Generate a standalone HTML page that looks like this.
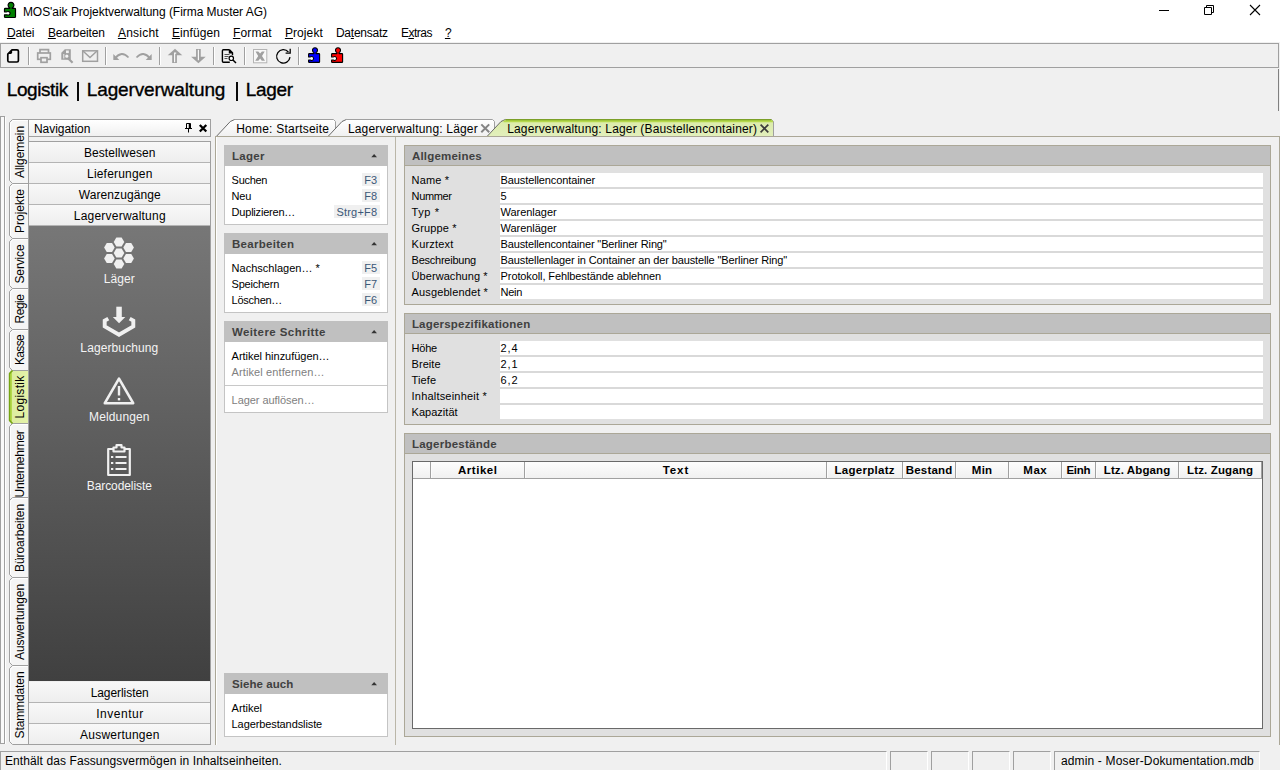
<!DOCTYPE html>
<html><head><meta charset="utf-8"><title>MOS'aik Projektverwaltung</title>
<style>
html,body{margin:0;padding:0;}
body{width:1280px;height:770px;position:relative;overflow:hidden;background:#f0f0f0;font-family:"Liberation Sans", sans-serif;}
.a{position:absolute;box-sizing:border-box;}
u{text-decoration:underline;text-underline-offset:1px;}
svg{position:absolute;overflow:visible;}
.hd{-webkit-text-stroke:0.35px #000;}
</style></head><body>
<div class="a" style="left:0px;top:0px;width:1280px;height:42px;background:#fff;"></div>
<svg style="left:0;top:0" width="24" height="22" viewBox="0 0 24 22">
<path d="M5.3 8.400H9.800V7.900a2.900 2.900 0 1 1 2.400 0V8.400H14.700Q15.500 8.400 15.500 9.200V16.700Q15.500 17.500 14.700 17.500H5.300Q4.500 17.500 4.500 16.700V14.800H7.600a1.700 1.700 0 1 0 0 -3H4.500V9.200Q4.500 8.400 5.300 8.400Z" fill="#008000" stroke="#000" stroke-width="1.200" stroke-linejoin="round"/>
<circle cx="7.6" cy="13.3" r="1" fill="#fff"/>
</svg>
<svg style="left:0;top:0" width="1280" height="22" viewBox="0 0 1280 22">
<path d="M1159 10.5h10" stroke="#000" stroke-width="1" fill="none"/>
<path d="M1204.5 7.5h7v7h-7z M1206.5 7.5v-2h7v7h-2" stroke="#000" stroke-width="1" fill="none"/>
<path d="M1250 5l10 10M1260 5l-10 10" stroke="#000" stroke-width="1.1" fill="none"/>
</svg>
<div class="a" style="left:0px;top:43px;width:1279px;height:25px;background:#f0f0f0;border:1px solid #a0a0a0;"></div>
<div class="a" style="left:28px;top:47px;width:1px;height:18px;background:#a0a0a0;"></div>
<div class="a" style="left:29px;top:47px;width:1px;height:18px;background:#fff;"></div>
<div class="a" style="left:105px;top:47px;width:1px;height:18px;background:#a0a0a0;"></div>
<div class="a" style="left:106px;top:47px;width:1px;height:18px;background:#fff;"></div>
<div class="a" style="left:159px;top:47px;width:1px;height:18px;background:#a0a0a0;"></div>
<div class="a" style="left:160px;top:47px;width:1px;height:18px;background:#fff;"></div>
<div class="a" style="left:213px;top:47px;width:1px;height:18px;background:#a0a0a0;"></div>
<div class="a" style="left:214px;top:47px;width:1px;height:18px;background:#fff;"></div>
<div class="a" style="left:244px;top:47px;width:1px;height:18px;background:#a0a0a0;"></div>
<div class="a" style="left:245px;top:47px;width:1px;height:18px;background:#fff;"></div>
<div class="a" style="left:298px;top:47px;width:1px;height:18px;background:#a0a0a0;"></div>
<div class="a" style="left:299px;top:47px;width:1px;height:18px;background:#fff;"></div>
<svg style="left:0;top:43px" width="360" height="25" viewBox="0 43 360 25">
<!-- new -->
<path d="M12 49.900h5q1.400 0 1.400 1.400v9.300q0 1.400-1.400 1.400h-7.800q-1.400 0-1.400-1.400v-6.400z" fill="#f4f4f4" stroke="#000" stroke-width="1.700" stroke-linejoin="round"/>
<path d="M8.300 53.900h2.500q1.300 0 1.300-1.300v-2.600z" fill="#000"/>
<!-- printer (disabled) -->
<g fill="none" stroke="#a0a0a0" stroke-width="1.700">
<path d="M40 53v-3.300h8.500v3.300"/><rect x="37.7" y="53" width="12.6" height="6.3"/><rect x="41" y="57.7" width="6" height="4.6" fill="#f0f0f0"/>
</g>
<!-- preview (disabled) -->
<path d="M61.300 52.800l3.500-3.600h6v10.600h-9.500z" fill="#a0a0a0"/><path d="M64 51.500h5" stroke="#f0f0f0" stroke-width="0" />
<circle cx="66.800" cy="56.200" r="2.300" fill="#f4f4f4" stroke="#a0a0a0" stroke-width="1.300"/><rect x="66" y="50.500" width="2.800" height="2.600" fill="#f0f0f0"/>
<path d="M68.300 58.500l4.300 4.300" stroke="#a0a0a0" stroke-width="2.200" fill="none"/><path d="M63.800 54v4.500" stroke="#f0f0f0" stroke-width="1" fill="none"/>
<!-- mail (disabled) -->
<g fill="none" stroke="#a0a0a0" stroke-width="1.500"><rect x="82.700" y="50.800" width="14.800" height="10.500"/><path d="M83 51l7 6.5l7-6.5"/></g>
<!-- undo / redo (disabled) -->
<g fill="none" stroke="#a0a0a0" stroke-width="1.8"><path d="M115 58.5q6.5-8.5 13.5-1"/><path d="M150 58.5q-6.500-8.500-13.500-1"/></g>
<path d="M113.300 54v6h6z" fill="#a0a0a0"/><path d="M151.700 54v6h-6z" fill="#a0a0a0"/>
<!-- up / down arrows (disabled) -->
<path d="M175 48.700l7.300 6.600h-14.600z" fill="#a0a0a0"/><rect x="172.200" y="55" width="4.700" height="8" fill="#a0a0a0"/><path d="M174.600 62.300V53.200h1.600" stroke="#f8f8f8" stroke-width="1.200" fill="none"/>
<path d="M198.400 63.300l7.300-6.600h-14.600z" fill="#a0a0a0"/><rect x="196.050" y="49" width="4.700" height="8" fill="#a0a0a0"/><path d="M198.400 49.800V60.300" stroke="#f8f8f8" stroke-width="1.200" fill="none"/>
<!-- doc search -->
<g fill="none" stroke="#000"><path d="M229.500 49.700h-6.100q-1 0-1 1v10.600q0 1 1 1h6.400 M229.500 49.700l3 3v2.600 M229.500 49.700v3h3" stroke-width="1.400"/>
<path d="M224.500 54.500h5M224.500 56.500h4M224.500 58.500h3" stroke-width="1" stroke="#555"/><circle cx="231.300" cy="58.300" r="2.200" stroke-width="1.200" fill="#fff"/><path d="M233 60l3 3" stroke-width="1.500"/></g>
<!-- delete (disabled) -->
<rect x="253.500" y="49.500" width="13.300" height="13.300" fill="#f8f8f8" stroke="#b4b4b4" stroke-width="1"/>
<path d="M255.500 51.400h2.800l1.800 2.200l1.800-2.200h2.800l-2.700 4.600l3 4.800h-3.200l-1.700-2.300l-1.700 2.300h-3.200l3-4.800z" fill="#a0a0a0"/>
<!-- refresh -->
<path d="M290 57.200a6.700 6.700 0 1 1 -1.600 -5.200" fill="none" stroke="#000" stroke-width="1.300"/><path d="M285.600 53.200H290.200V48.700" fill="none" stroke="#000" stroke-width="1.300"/>
<!-- blue puzzle -->
<path d="M309.30 53.600H313.90V52.500a2.500 2.500 0 1 1 2.200 0V53.600H318.90Q319.60 53.600 319.60 54.300V61.700Q319.60 62.400 318.90 62.400H309.30Q308.60 62.400 308.60 61.700V60H310.60a1.860 1.860 0 1 0 0 -3H308.60V54.300Q308.60 53.600 309.30 53.600Z" fill="#0000ff" stroke="#000" stroke-width="1.100" stroke-linejoin="round"/><circle cx="311.60" cy="58.5" r="1.150" fill="#fff"/>
<path d="M332.30 53.600H336.90V52.500a2.500 2.500 0 1 1 2.200 0V53.600H341.90Q342.60 53.600 342.60 54.300V61.700Q342.60 62.400 341.90 62.400H332.30Q331.60 62.400 331.60 61.700V60H333.60a1.860 1.860 0 1 0 0 -3H331.60V54.300Q331.60 53.600 332.30 53.600Z" fill="#ff0000" stroke="#000" stroke-width="1.100" stroke-linejoin="round"/><circle cx="334.60" cy="58.5" r="1.150" fill="#fff"/>
</svg>
<div class="a" style="left:1278px;top:69px;width:1px;height:42px;background:#808080;"></div>
<div class="a" style="left:76.9px;top:81.8px;width:2.1px;height:19px;background:#0a0a0a;"></div>
<div class="a" style="left:235.9px;top:81.8px;width:2.1px;height:19px;background:#0a0a0a;"></div>
<div class="a" style="left:0px;top:116px;width:5px;height:628px;background:#fafafa;border:1px solid #a0a0a0;"></div>
<div class="a" style="left:5px;top:117px;width:1px;height:627px;background:#fff;"></div>
<svg style="left:0;top:0" width="40" height="770" viewBox="0 0 40 770"><defs><linearGradient id="vgg" x1="0" x2="1" y1="0" y2="0"><stop offset="0" stop-color="#dcec9f"/><stop offset="1" stop-color="#e4f2a8"/></linearGradient></defs><path d="M28.500 119.500H12.500L9.500 122.500V180.5L12.500 183.5L9.500 186.5V235.5L12.500 238.5L9.500 241.5V285.5L12.500 288.5L9.500 291.5V326.5L12.500 329.5L9.500 332.5V367.5L12.500 370.5L9.500 373.5V420.5L12.500 423.5L9.500 426.5V574.5L12.500 577.5L9.500 580.5V662.5L12.500 665.5L9.500 668.5V741.500L12.500 744.500H28.500" fill="#f5f5f5" stroke="none"/><path d="M10.500 180V123.5L13 120.5H28" fill="none" stroke="#ffffff" stroke-width="1"/><path d="M10.500 235V187.5L13 184.5H28" fill="none" stroke="#ffffff" stroke-width="1"/><path d="M10.500 285V242.5L13 239.5H28" fill="none" stroke="#ffffff" stroke-width="1"/><path d="M10.500 326V292.5L13 289.5H28" fill="none" stroke="#ffffff" stroke-width="1"/><path d="M10.500 367V333.5L13 330.5H28" fill="none" stroke="#ffffff" stroke-width="1"/><path d="M10.500 494V427.5L13 424.5H28" fill="none" stroke="#ffffff" stroke-width="1"/><path d="M10.500 574V501.5L13 498.5H28" fill="none" stroke="#ffffff" stroke-width="1"/><path d="M10.500 662V581.5L13 578.5H28" fill="none" stroke="#ffffff" stroke-width="1"/><path d="M10.500 741V669.5L13 666.5H28" fill="none" stroke="#ffffff" stroke-width="1"/><path d="M12.500 370.500H28.500V423.500H12.500L9.500 420.500V373.500z" fill="url(#vgg)"/><path d="M11 372.500V421.500" stroke="#b4d94c" stroke-width="2" fill="none"/><path d="M12.500 370.500L9.500 373.500V420.500L12.500 423.500" stroke="#76a512" stroke-width="1.200" fill="none"/><path d="M28.500 119.500H12.500L9.500 122.500V180.5L12.500 183.5L9.500 186.5V235.5L12.500 238.5L9.500 241.5V285.5L12.500 288.5L9.500 291.5V326.5L12.500 329.5L9.500 332.5V367.5L12.500 370.5L9.500 373.5V420.5L12.500 423.5L9.500 426.5V574.5L12.500 577.5L9.500 580.5V662.5L12.500 665.5L9.500 668.5V741.500L12.500 744.500H28.500" fill="none" stroke="#a0a0a0" stroke-width="1"/><path d="M12.500 183.5H28.500" stroke="#a0a0a0" stroke-width="1" fill="none"/><path d="M12.500 238.5H28.500" stroke="#a0a0a0" stroke-width="1" fill="none"/><path d="M12.500 288.5H28.500" stroke="#a0a0a0" stroke-width="1" fill="none"/><path d="M12.500 329.5H28.500" stroke="#a0a0a0" stroke-width="1" fill="none"/><path d="M12.500 370.5H28.500" stroke="#a0a0a0" stroke-width="1" fill="none"/><path d="M12.500 423.5H28.500" stroke="#a0a0a0" stroke-width="1" fill="none"/><path d="M12.500 497.5H28.500" stroke="#a0a0a0" stroke-width="1" fill="none"/><path d="M12.500 577.5H28.500" stroke="#a0a0a0" stroke-width="1" fill="none"/><path d="M12.500 665.5H28.500" stroke="#a0a0a0" stroke-width="1" fill="none"/><path d="M12.500 497.500L9.500 500.500" stroke="#a0a0a0" stroke-width="1" fill="none"/><path d="M12.500 370.500L9.500 373.500V420.500L12.500 423.500" stroke="#76a512" stroke-width="1.200" fill="none"/></svg>
<div class="a" style="left:28px;top:119px;width:1px;height:626px;background:#a0a0a0;"></div>
<div class="a" style="left:28px;top:119px;width:183px;height:18px;background:linear-gradient(#ffffff,#f0f0f0);border:1px solid #a0a0a0;"></div>
<svg style="left:180px;top:119px" width="32" height="18" viewBox="180 119 32 18">
<path d="M186.500 123.500h4v5h-4z M185 128.500h7 M188.500 128.500v4" fill="none" stroke="#000" stroke-width="1"/><path d="M189.500 123.500v5" stroke="#000" stroke-width="1.500"/>
<path d="M199.800 125l6.500 6.500M206.300 125l-6.500 6.500" stroke="#000" stroke-width="2.300" fill="none"/>
</svg>
<div class="a" style="left:28px;top:141px;width:183px;height:604px;background:#f0f0f0;border:1px solid #a0a0a0;"></div>
<div class="a" style="left:29px;top:142px;width:181px;height:20px;background:linear-gradient(#f8f8f8,#eeeeee);"></div>
<div class="a" style="left:29px;top:163px;width:181px;height:20px;background:linear-gradient(#f8f8f8,#eeeeee);"></div>
<div class="a" style="left:29px;top:184px;width:181px;height:20px;background:linear-gradient(#f8f8f8,#eeeeee);"></div>
<div class="a" style="left:29px;top:205px;width:181px;height:20px;background:linear-gradient(#f8f8f8,#eeeeee);"></div>
<div class="a" style="left:29px;top:682px;width:181px;height:20px;background:linear-gradient(#f8f8f8,#eeeeee);"></div>
<div class="a" style="left:29px;top:703px;width:181px;height:20px;background:linear-gradient(#f8f8f8,#eeeeee);"></div>
<div class="a" style="left:29px;top:724px;width:181px;height:20px;background:linear-gradient(#f8f8f8,#eeeeee);"></div>
<div class="a" style="left:29px;top:162px;width:181px;height:1px;background:#b4b4b4;"></div>
<div class="a" style="left:29px;top:183px;width:181px;height:1px;background:#b4b4b4;"></div>
<div class="a" style="left:29px;top:204px;width:181px;height:1px;background:#b4b4b4;"></div>
<div class="a" style="left:29px;top:225px;width:181px;height:1px;background:#b4b4b4;"></div>
<div class="a" style="left:29px;top:702px;width:181px;height:1px;background:#b4b4b4;"></div>
<div class="a" style="left:29px;top:723px;width:181px;height:1px;background:#b4b4b4;"></div>
<div class="a" style="left:29px;top:226px;width:181px;height:455px;background:linear-gradient(#777777,#404040);"></div>
<svg style="left:90px;top:230px" width="60" height="260" viewBox="90 230 60 260">
<g fill="#f0f0f0"><polygon points="124.30,253.00 121.65,257.59 116.35,257.59 113.70,253.00 116.35,248.41 121.65,248.41"/><polygon points="124.30,242.00 121.65,246.59 116.35,246.59 113.70,242.00 116.35,237.41 121.65,237.41"/><polygon points="124.30,264.00 121.65,268.59 116.35,268.59 113.70,264.00 116.35,259.41 121.65,259.41"/><polygon points="114.70,247.50 112.05,252.09 106.75,252.09 104.10,247.50 106.75,242.91 112.05,242.91"/><polygon points="133.90,247.50 131.25,252.09 125.95,252.09 123.30,247.50 125.95,242.91 131.25,242.91"/><polygon points="114.70,258.50 112.05,263.09 106.75,263.09 104.10,258.50 106.75,253.91 112.05,253.91"/><polygon points="133.90,258.50 131.25,263.09 125.95,263.09 123.30,258.50 125.95,253.91 131.25,253.91"/></g>
<g fill="none" stroke="#f0f0f0">
<path d="M108.300 318.600l-3.600 2v5.900l14.300 8.300l14.300-8.300v-5.900l-3.600-2" stroke-width="3.900" stroke-linejoin="miter"/>
<path d="M119.050 306.700v10.500" stroke-width="5.500"/>
</g><path d="M112.800 316.900h12.500l-6.250 6.300z" fill="#f0f0f0"/>
<g fill="none" stroke="#f0f0f0" stroke-width="2.600" stroke-linejoin="round" stroke-linecap="round">
<path d="M119 378.600l14.200 24.600h-28.400z"/><path d="M119 386v9.500" stroke-width="2.400" stroke-linecap="butt"/><path d="M119 398v2.400" stroke-width="2.400" stroke-linecap="butt"/>
</g>
<g fill="none" stroke="#f0f0f0" stroke-width="2.200" stroke-linejoin="round">
<path d="M113.500 449h-5.300v26h21.600v-26h-5.300"/><path d="M113.500 451.500v-4h3v-2.300h5v2.300h3v4z"/>
<path d="M115.500 457h11M115.500 463h11M115.500 469h11M111 457h2.300M111 463h2.300M111 469h2.300"/>
</g></svg>
<svg style="left:210px;top:112px" width="580" height="30" viewBox="210 112 580 30"><defs><linearGradient id="tg" x1="0" x2="0" y1="0" y2="1"><stop offset="0" stop-color="#ffffff"/><stop offset="1" stop-color="#f0f0f0"/></linearGradient><linearGradient id="tga" x1="0" x2="0" y1="0" y2="1"><stop offset="0" stop-color="#dbeba8"/><stop offset="1" stop-color="#e2efbc"/></linearGradient></defs><path d="M216.3 136.500L230.3 121.500L234.60000000000002 119.500H333.5L335.5 121.500V136.500z" fill="url(#tg)" stroke="none"/><path d="M234.60000000000002 119.500H333.5L335.5 121.500V136.500" fill="none" stroke="#a0a0a0" stroke-width="1"/><path d="M216.3 136.500L230.3 121.500L234.60000000000002 119.500" fill="none" stroke="#5a5a5a" stroke-width="0.900"/><path d="M328 136.500L342 121.500L346.3 119.500H492.5L494.5 121.500V136.500z" fill="url(#tg)" stroke="none"/><path d="M346.3 119.500H492.5L494.5 121.500V136.500" fill="none" stroke="#a0a0a0" stroke-width="1"/><path d="M328 136.500L342 121.500L346.3 119.500" fill="none" stroke="#5a5a5a" stroke-width="0.900"/><path d="M487 136.500L501 121.500L505.3 119.500H771.5L773.5 121.500V136.500z" fill="url(#tga)" stroke="none"/><path d="M505.3 119.500H771.5L773.5 121.500V136.500" fill="none" stroke="#a0a0a0" stroke-width="1"/><path d="M487 136.500L501 121.500L505.3 119.500" fill="none" stroke="#5a5a5a" stroke-width="0.900"/><path d="M505.500 119.900H771.500" stroke="#6f9f00" stroke-width="1.500"/><path d="M503.500 121.400H773" stroke="#b6d94e" stroke-width="1.600"/><path d="M481.300 124.400l7.900 7.900M489.200 124.400l-7.900 7.900" stroke="#848484" stroke-width="2" fill="none"/><path d="M760.600 124.600l7.700 7.700M768.300 124.600l-7.700 7.700" stroke="#3c3c3c" stroke-width="1.700" fill="none"/></svg>
<div class="a" style="left:215px;top:136px;width:1065px;height:609px;border:1px solid #aba797;border-bottom:none;"></div>
<div class="a" style="left:216px;top:137px;width:1px;height:608px;background:#fff;"></div>
<div class="a" style="left:395px;top:137px;width:1px;height:608px;background:#bab6a8;"></div>
<div class="a" style="left:224px;top:145px;width:164px;height:21px;background:#c0c0c0;"></div>
<div class="a" style="left:224px;top:166px;width:164px;height:59px;background:#fff;border:1px solid #c4c4c4;border-top:none;"></div>
<svg style="left:370px;top:153px" width="8" height="5" viewBox="0 0 8 5"><path d="M1.300 4.200h5.700L4.150 1z" fill="#333"/></svg>
<div class="a" style="left:361.8px;top:173px;width:18.19999999999999px;height:13px;background:#f0f0f0;"></div>
<div class="a" style="left:361.8px;top:189px;width:18.19999999999999px;height:13px;background:#f0f0f0;"></div>
<div class="a" style="left:334.0px;top:205px;width:46.0px;height:13px;background:#f0f0f0;"></div>
<div class="a" style="left:224px;top:233px;width:164px;height:21px;background:#c0c0c0;"></div>
<div class="a" style="left:224px;top:254px;width:164px;height:59px;background:#fff;border:1px solid #c4c4c4;border-top:none;"></div>
<svg style="left:370px;top:241px" width="8" height="5" viewBox="0 0 8 5"><path d="M1.300 4.200h5.700L4.150 1z" fill="#333"/></svg>
<div class="a" style="left:361.8px;top:261px;width:18.19999999999999px;height:13px;background:#f0f0f0;"></div>
<div class="a" style="left:361.8px;top:277px;width:18.19999999999999px;height:13px;background:#f0f0f0;"></div>
<div class="a" style="left:361.8px;top:293px;width:18.19999999999999px;height:13px;background:#f0f0f0;"></div>
<div class="a" style="left:224px;top:321px;width:164px;height:21px;background:#c0c0c0;"></div>
<div class="a" style="left:224px;top:342px;width:164px;height:71px;background:#fff;border:1px solid #c4c4c4;border-top:none;"></div>
<svg style="left:370px;top:329px" width="8" height="5" viewBox="0 0 8 5"><path d="M1.300 4.200h5.700L4.150 1z" fill="#333"/></svg>
<div class="a" style="left:225px;top:385px;width:162px;height:1px;background:#c8c8c8;"></div>
<div class="a" style="left:224px;top:673px;width:164px;height:21px;background:#c0c0c0;"></div>
<div class="a" style="left:224px;top:694px;width:164px;height:43px;background:#fff;border:1px solid #c4c4c4;border-top:none;"></div>
<svg style="left:370px;top:681px" width="8" height="5" viewBox="0 0 8 5"><path d="M1.300 4.200h5.700L4.150 1z" fill="#333"/></svg>
<div class="a" style="left:404px;top:145px;width:867px;height:160px;background:#e0e0e0;border:1px solid #aba797;"></div>
<div class="a" style="left:405px;top:146px;width:865px;height:19px;background:#c0c0c0;"></div>
<div class="a" style="left:405px;top:165px;width:865px;height:1px;background:#aba797;"></div>
<div class="a" style="left:500px;top:173px;width:763px;height:126px;background:#d9d9d9;"></div>
<div class="a" style="left:500px;top:173px;width:763px;height:14px;background:#fff;"></div>
<div class="a" style="left:500px;top:189px;width:763px;height:14px;background:#fff;"></div>
<div class="a" style="left:500px;top:205px;width:763px;height:14px;background:#fff;"></div>
<div class="a" style="left:500px;top:221px;width:763px;height:14px;background:#fff;"></div>
<div class="a" style="left:500px;top:237px;width:763px;height:14px;background:#fff;"></div>
<div class="a" style="left:500px;top:253px;width:763px;height:14px;background:#fff;"></div>
<div class="a" style="left:500px;top:269px;width:763px;height:14px;background:#fff;"></div>
<div class="a" style="left:500px;top:285px;width:763px;height:14px;background:#fff;"></div>
<div class="a" style="left:404px;top:313px;width:867px;height:112px;background:#e0e0e0;border:1px solid #aba797;"></div>
<div class="a" style="left:405px;top:314px;width:865px;height:19px;background:#c0c0c0;"></div>
<div class="a" style="left:405px;top:333px;width:865px;height:1px;background:#aba797;"></div>
<div class="a" style="left:500px;top:341px;width:763px;height:78px;background:#d9d9d9;"></div>
<div class="a" style="left:500px;top:341px;width:763px;height:14px;background:#fff;"></div>
<div class="a" style="left:500px;top:357px;width:763px;height:14px;background:#fff;"></div>
<div class="a" style="left:500px;top:373px;width:763px;height:14px;background:#fff;"></div>
<div class="a" style="left:500px;top:389px;width:763px;height:14px;background:#fff;"></div>
<div class="a" style="left:500px;top:405px;width:763px;height:14px;background:#fff;"></div>
<div class="a" style="left:404px;top:433px;width:867px;height:304px;background:#e0e0e0;border:1px solid #aba797;"></div>
<div class="a" style="left:405px;top:434px;width:865px;height:19px;background:#c0c0c0;"></div>
<div class="a" style="left:405px;top:453px;width:865px;height:1px;background:#aba797;"></div>
<div class="a" style="left:412px;top:461px;width:851px;height:268px;background:#fff;border:1px solid #696969;"></div>
<div class="a" style="left:413px;top:462px;width:849px;height:17px;background:linear-gradient(#fdfdfd,#f0f0f0);border-bottom:1px solid #a0a0a0;"></div>
<div class="a" style="left:430px;top:462px;width:1px;height:16px;background:#a0a0a0;"></div>
<div class="a" style="left:431px;top:462px;width:1px;height:16px;background:#fcfcfc;"></div>
<div class="a" style="left:524px;top:462px;width:1px;height:16px;background:#a0a0a0;"></div>
<div class="a" style="left:525px;top:462px;width:1px;height:16px;background:#fcfcfc;"></div>
<div class="a" style="left:826px;top:462px;width:1px;height:16px;background:#a0a0a0;"></div>
<div class="a" style="left:827px;top:462px;width:1px;height:16px;background:#fcfcfc;"></div>
<div class="a" style="left:902px;top:462px;width:1px;height:16px;background:#a0a0a0;"></div>
<div class="a" style="left:903px;top:462px;width:1px;height:16px;background:#fcfcfc;"></div>
<div class="a" style="left:955px;top:462px;width:1px;height:16px;background:#a0a0a0;"></div>
<div class="a" style="left:956px;top:462px;width:1px;height:16px;background:#fcfcfc;"></div>
<div class="a" style="left:1008px;top:462px;width:1px;height:16px;background:#a0a0a0;"></div>
<div class="a" style="left:1009px;top:462px;width:1px;height:16px;background:#fcfcfc;"></div>
<div class="a" style="left:1061px;top:462px;width:1px;height:16px;background:#a0a0a0;"></div>
<div class="a" style="left:1062px;top:462px;width:1px;height:16px;background:#fcfcfc;"></div>
<div class="a" style="left:1095px;top:462px;width:1px;height:16px;background:#a0a0a0;"></div>
<div class="a" style="left:1096px;top:462px;width:1px;height:16px;background:#fcfcfc;"></div>
<div class="a" style="left:1178px;top:462px;width:1px;height:16px;background:#a0a0a0;"></div>
<div class="a" style="left:1179px;top:462px;width:1px;height:16px;background:#fcfcfc;"></div>
<div class="a" style="left:1261px;top:462px;width:1px;height:16px;background:#a0a0a0;"></div>
<div class="a" style="left:0px;top:751px;width:1280px;height:1px;background:#a0a0a0;"></div>
<div class="a" style="left:0px;top:751px;width:887px;height:19px;border:1px solid #a0a0a0;border-right:1px solid #fff;border-bottom:none;"></div>
<div class="a" style="left:890px;top:751px;width:38px;height:19px;border:1px solid #a0a0a0;border-right:1px solid #fff;border-bottom:none;"></div>
<div class="a" style="left:931px;top:751px;width:38px;height:19px;border:1px solid #a0a0a0;border-right:1px solid #fff;border-bottom:none;"></div>
<div class="a" style="left:972px;top:751px;width:38px;height:19px;border:1px solid #a0a0a0;border-right:1px solid #fff;border-bottom:none;"></div>
<div class="a" style="left:1013px;top:751px;width:38px;height:19px;border:1px solid #a0a0a0;border-right:1px solid #fff;border-bottom:none;"></div>
<div class="a" style="left:1054px;top:751px;width:206px;height:19px;border:1px solid #a0a0a0;border-right:1px solid #fff;border-bottom:none;"></div>
<div class="a" style="left:887px;top:751px;width:3px;height:1px;background:#f0f0f0;"></div>
<div class="a" style="left:928px;top:751px;width:3px;height:1px;background:#f0f0f0;"></div>
<div class="a" style="left:969px;top:751px;width:3px;height:1px;background:#f0f0f0;"></div>
<div class="a" style="left:1010px;top:751px;width:3px;height:1px;background:#f0f0f0;"></div>
<div class="a" style="left:1051px;top:751px;width:3px;height:1px;background:#f0f0f0;"></div>
<div class="a" style="left:1260px;top:751px;width:20px;height:1px;background:#f0f0f0;"></div>
<span class="a " style="left:22.90px;top:11.84px;line-height:0;white-space:nowrap;font-size:12px;font-weight:400;letter-spacing:-0.039px;color:#000;">MOS&#x27;aik Projektverwaltung (Firma Muster AG)</span>
<span class="a " style="left:6.90px;top:32.84px;line-height:0;white-space:nowrap;font-size:12px;font-weight:400;letter-spacing:-0.106px;color:#000;"><u>D</u>atei</span>
<span class="a " style="left:47.90px;top:32.84px;line-height:0;white-space:nowrap;font-size:12px;font-weight:400;letter-spacing:-0.106px;color:#000;"><u>B</u>earbeiten</span>
<span class="a " style="left:117.90px;top:32.84px;line-height:0;white-space:nowrap;font-size:12px;font-weight:400;letter-spacing:0.232px;color:#000;"><u>A</u>nsicht</span>
<span class="a " style="left:171.90px;top:32.84px;line-height:0;white-space:nowrap;font-size:12px;font-weight:400;letter-spacing:0.076px;color:#000;"><u>E</u>infügen</span>
<span class="a " style="left:232.90px;top:32.84px;line-height:0;white-space:nowrap;font-size:12px;font-weight:400;letter-spacing:0.161px;color:#000;"><u>F</u>ormat</span>
<span class="a " style="left:284.90px;top:32.84px;line-height:0;white-space:nowrap;font-size:12px;font-weight:400;letter-spacing:0.092px;color:#000;"><u>P</u>rojekt</span>
<span class="a " style="left:335.90px;top:32.84px;line-height:0;white-space:nowrap;font-size:12px;font-weight:400;letter-spacing:-0.227px;color:#000;">Da<u>t</u>ensatz</span>
<span class="a " style="left:400.90px;top:32.84px;line-height:0;white-space:nowrap;font-size:12px;font-weight:400;letter-spacing:-0.505px;color:#000;">E<u>x</u>tras</span>
<span class="a " style="left:444.90px;top:32.84px;line-height:0;white-space:nowrap;font-size:12px;font-weight:400;letter-spacing:-1.188px;color:#000;"><u>?</u></span>
<span class="a hd" style="left:6.80px;top:90.42px;line-height:0;white-space:nowrap;font-size:19px;font-weight:400;letter-spacing:-0.428px;color:#000;">Logistik</span>
<span class="a hd" style="left:86.80px;top:90.42px;line-height:0;white-space:nowrap;font-size:19px;font-weight:400;letter-spacing:-0.132px;color:#000;">Lagerverwaltung</span>
<span class="a hd" style="left:245.80px;top:90.42px;line-height:0;white-space:nowrap;font-size:19px;font-weight:400;letter-spacing:-0.322px;color:#000;">Lager</span>
<div class="a" style="left:24px;top:151.5px;width:0;height:0;transform:rotate(-90deg);"><span style="position:absolute;left:-26.00px;top:-4.16px;white-space:nowrap;line-height:0;font-size:12px;font-weight:400;letter-spacing:-0.078px;color:#000;">Allgemein</span></div>
<div class="a" style="left:24px;top:211.0px;width:0;height:0;transform:rotate(-90deg);"><span style="position:absolute;left:-22.00px;top:-4.16px;white-space:nowrap;line-height:0;font-size:12px;font-weight:400;letter-spacing:-0.004px;color:#000;">Projekte</span></div>
<div class="a" style="left:24px;top:263.5px;width:0;height:0;transform:rotate(-90deg);"><span style="position:absolute;left:-19.50px;top:-4.16px;white-space:nowrap;line-height:0;font-size:12px;font-weight:400;letter-spacing:-0.145px;color:#000;">Service</span></div>
<div class="a" style="left:24px;top:309.0px;width:0;height:0;transform:rotate(-90deg);"><span style="position:absolute;left:-14.50px;top:-4.16px;white-space:nowrap;line-height:0;font-size:12px;font-weight:400;letter-spacing:-0.472px;color:#000;">Regie</span></div>
<div class="a" style="left:24px;top:350.0px;width:0;height:0;transform:rotate(-90deg);"><span style="position:absolute;left:-15.00px;top:-4.16px;white-space:nowrap;line-height:0;font-size:12px;font-weight:400;letter-spacing:-0.672px;color:#000;">Kasse</span></div>
<div class="a" style="left:24px;top:397.0px;width:0;height:0;transform:rotate(-90deg);"><span style="position:absolute;left:-21.50px;top:-4.16px;white-space:nowrap;line-height:0;font-size:12px;font-weight:400;letter-spacing:0.289px;color:#000;">Logistik</span></div>
<div class="a" style="left:9px;top:424px;width:20px;height:73.5px;overflow:hidden;"><div class="a" style="left:15px;top:40px;width:0;height:0;transform:rotate(-90deg);"><span style="position:absolute;left:-33.50px;top:-4.16px;white-space:nowrap;line-height:0;font-size:12px;font-weight:400;letter-spacing:-0.276px;color:#000;">Unternehmer</span></div></div>
<div class="a" style="left:24px;top:537.5px;width:0;height:0;transform:rotate(-90deg);"><span style="position:absolute;left:-34.00px;top:-4.16px;white-space:nowrap;line-height:0;font-size:12px;font-weight:400;letter-spacing:-0.06px;color:#000;">Büroarbeiten</span></div>
<div class="a" style="left:24px;top:621.5px;width:0;height:0;transform:rotate(-90deg);"><span style="position:absolute;left:-38.00px;top:-4.16px;white-space:nowrap;line-height:0;font-size:12px;font-weight:400;letter-spacing:-0.06px;color:#000;">Auswertungen</span></div>
<div class="a" style="left:24px;top:705.0px;width:0;height:0;transform:rotate(-90deg);"><span style="position:absolute;left:-33.50px;top:-4.16px;white-space:nowrap;line-height:0;font-size:12px;font-weight:400;letter-spacing:-0.105px;color:#000;">Stammdaten</span></div>
<span class="a " style="left:33.90px;top:128.84px;line-height:0;white-space:nowrap;font-size:12px;font-weight:400;letter-spacing:-0.02px;color:#000;">Navigation</span>
<span class="a " style="left:83.98px;top:152.84px;line-height:0;white-space:nowrap;font-size:12px;font-weight:400;letter-spacing:0.065px;color:#000;">Bestellwesen</span>
<span class="a " style="left:87.04px;top:173.84px;line-height:0;white-space:nowrap;font-size:12px;font-weight:400;letter-spacing:0.192px;color:#000;">Lieferungen</span>
<span class="a " style="left:78.74px;top:194.84px;line-height:0;white-space:nowrap;font-size:12px;font-weight:400;letter-spacing:0.087px;color:#000;">Warenzugänge</span>
<span class="a " style="left:73.81px;top:215.84px;line-height:0;white-space:nowrap;font-size:12px;font-weight:400;letter-spacing:0.218px;color:#000;">Lagerverwaltung</span>
<span class="a " style="left:90.67px;top:692.84px;line-height:0;white-space:nowrap;font-size:12px;font-weight:400;letter-spacing:-0.065px;color:#000;">Lagerlisten</span>
<span class="a " style="left:96.21px;top:713.84px;line-height:0;white-space:nowrap;font-size:12px;font-weight:400;letter-spacing:0.518px;color:#000;">Inventur</span>
<span class="a " style="left:80.06px;top:734.84px;line-height:0;white-space:nowrap;font-size:12px;font-weight:400;letter-spacing:0.232px;color:#000;">Auswertungen</span>
<span class="a " style="left:103.83px;top:278.84px;line-height:0;white-space:nowrap;font-size:12px;font-weight:400;letter-spacing:0.059px;color:#f4f4f4;">Läger</span>
<span class="a " style="left:80.36px;top:347.84px;line-height:0;white-space:nowrap;font-size:12px;font-weight:400;letter-spacing:0.105px;color:#f4f4f4;">Lagerbuchung</span>
<span class="a " style="left:89.11px;top:416.84px;line-height:0;white-space:nowrap;font-size:12px;font-weight:400;letter-spacing:0.123px;color:#f4f4f4;">Meldungen</span>
<span class="a " style="left:86.76px;top:485.84px;line-height:0;white-space:nowrap;font-size:12px;font-weight:400;letter-spacing:-0.087px;color:#f4f4f4;">Barcodeliste</span>
<span class="a " style="left:236.20px;top:128.84px;line-height:0;white-space:nowrap;font-size:12px;font-weight:400;letter-spacing:0.227px;color:#000;">Home: Startseite</span>
<span class="a " style="left:347.90px;top:128.84px;line-height:0;white-space:nowrap;font-size:12px;font-weight:400;letter-spacing:0.178px;color:#000;">Lagerverwaltung: Läger</span>
<span class="a " style="left:507.20px;top:128.84px;line-height:0;white-space:nowrap;font-size:12px;font-weight:400;letter-spacing:0.163px;color:#000;">Lagerverwaltung: Lager (Baustellencontainer)</span>
<span class="a " style="left:231.90px;top:156.02px;line-height:0;white-space:nowrap;font-size:11.5px;font-weight:700;letter-spacing:0.334px;color:#404040;">Lager</span>
<span class="a " style="left:231.60px;top:180.19px;line-height:0;white-space:nowrap;font-size:11px;font-weight:400;letter-spacing:-0.302px;color:#000;">Suchen</span>
<span class="a " style="left:364.20px;top:180.19px;line-height:0;white-space:nowrap;font-size:11px;font-weight:400;letter-spacing:0.178px;color:#3c5878;">F3</span>
<span class="a " style="left:231.60px;top:196.19px;line-height:0;white-space:nowrap;font-size:11px;font-weight:400;letter-spacing:-0.229px;color:#000;">Neu</span>
<span class="a " style="left:364.20px;top:196.19px;line-height:0;white-space:nowrap;font-size:11px;font-weight:400;letter-spacing:0.178px;color:#3c5878;">F8</span>
<span class="a " style="left:231.60px;top:212.19px;line-height:0;white-space:nowrap;font-size:11px;font-weight:400;letter-spacing:-0.211px;color:#000;">Duplizieren…</span>
<span class="a " style="left:336.40px;top:212.19px;line-height:0;white-space:nowrap;font-size:11px;font-weight:400;letter-spacing:0.223px;color:#3c5878;">Strg+F8</span>
<span class="a " style="left:231.90px;top:244.02px;line-height:0;white-space:nowrap;font-size:11.5px;font-weight:700;letter-spacing:0.306px;color:#404040;">Bearbeiten</span>
<span class="a " style="left:231.60px;top:268.19px;line-height:0;white-space:nowrap;font-size:11px;font-weight:400;letter-spacing:0.016px;color:#000;">Nachschlagen… *</span>
<span class="a " style="left:364.20px;top:268.19px;line-height:0;white-space:nowrap;font-size:11px;font-weight:400;letter-spacing:0.178px;color:#3c5878;">F5</span>
<span class="a " style="left:231.60px;top:284.19px;line-height:0;white-space:nowrap;font-size:11px;font-weight:400;letter-spacing:-0.227px;color:#000;">Speichern</span>
<span class="a " style="left:364.20px;top:284.19px;line-height:0;white-space:nowrap;font-size:11px;font-weight:400;letter-spacing:0.178px;color:#3c5878;">F7</span>
<span class="a " style="left:231.60px;top:300.19px;line-height:0;white-space:nowrap;font-size:11px;font-weight:400;letter-spacing:-0.262px;color:#000;">Löschen…</span>
<span class="a " style="left:364.20px;top:300.19px;line-height:0;white-space:nowrap;font-size:11px;font-weight:400;letter-spacing:0.178px;color:#3c5878;">F6</span>
<span class="a " style="left:231.90px;top:332.02px;line-height:0;white-space:nowrap;font-size:11.5px;font-weight:700;letter-spacing:0.415px;color:#404040;">Weitere Schritte</span>
<span class="a " style="left:231.60px;top:356.19px;line-height:0;white-space:nowrap;font-size:11px;font-weight:400;letter-spacing:-0.024px;color:#000;">Artikel hinzufügen…</span>
<span class="a " style="left:231.60px;top:372.19px;line-height:0;white-space:nowrap;font-size:11px;font-weight:400;letter-spacing:0.105px;color:#808080;">Artikel entfernen…</span>
<span class="a " style="left:231.60px;top:400.19px;line-height:0;white-space:nowrap;font-size:11px;font-weight:400;letter-spacing:-0.052px;color:#808080;">Lager auflösen…</span>
<span class="a " style="left:231.90px;top:684.02px;line-height:0;white-space:nowrap;font-size:11.5px;font-weight:700;letter-spacing:0.078px;color:#404040;">Siehe auch</span>
<span class="a " style="left:231.60px;top:708.19px;line-height:0;white-space:nowrap;font-size:11px;font-weight:400;letter-spacing:-0.037px;color:#000;">Artikel</span>
<span class="a " style="left:231.60px;top:724.19px;line-height:0;white-space:nowrap;font-size:11px;font-weight:400;letter-spacing:-0.102px;color:#000;">Lagerbestandsliste</span>
<span class="a " style="left:411.90px;top:156.02px;line-height:0;white-space:nowrap;font-size:11.5px;font-weight:700;letter-spacing:0.205px;color:#404040;">Allgemeines</span>
<span class="a " style="left:411.60px;top:180.19px;line-height:0;white-space:nowrap;font-size:11px;font-weight:400;letter-spacing:0.135px;color:#000;">Name *</span>
<span class="a " style="left:500.60px;top:180.19px;line-height:0;white-space:nowrap;font-size:11px;font-weight:400;letter-spacing:-0.112px;color:#000;">Baustellencontainer</span>
<span class="a " style="left:411.60px;top:196.19px;line-height:0;white-space:nowrap;font-size:11px;font-weight:400;letter-spacing:-0.362px;color:#000;">Nummer</span>
<span class="a " style="left:500.60px;top:196.19px;line-height:0;white-space:nowrap;font-size:11px;font-weight:400;letter-spacing:0.375px;color:#000;">5</span>
<span class="a " style="left:411.60px;top:212.19px;line-height:0;white-space:nowrap;font-size:11px;font-weight:400;letter-spacing:0.584px;color:#000;">Typ *</span>
<span class="a " style="left:500.60px;top:212.19px;line-height:0;white-space:nowrap;font-size:11px;font-weight:400;letter-spacing:-0.045px;color:#000;">Warenlager</span>
<span class="a " style="left:411.60px;top:228.19px;line-height:0;white-space:nowrap;font-size:11px;font-weight:400;letter-spacing:0.121px;color:#000;">Gruppe *</span>
<span class="a " style="left:500.60px;top:228.19px;line-height:0;white-space:nowrap;font-size:11px;font-weight:400;letter-spacing:-0.045px;color:#000;">Warenläger</span>
<span class="a " style="left:411.60px;top:244.19px;line-height:0;white-space:nowrap;font-size:11px;font-weight:400;letter-spacing:0.205px;color:#000;">Kurztext</span>
<span class="a " style="left:500.60px;top:244.19px;line-height:0;white-space:nowrap;font-size:11px;font-weight:400;letter-spacing:-0.145px;color:#000;">Baustellencontainer &quot;Berliner Ring&quot;</span>
<span class="a " style="left:411.60px;top:260.19px;line-height:0;white-space:nowrap;font-size:11px;font-weight:400;letter-spacing:-0.248px;color:#000;">Beschreibung</span>
<span class="a " style="left:500.60px;top:260.19px;line-height:0;white-space:nowrap;font-size:11px;font-weight:400;letter-spacing:-0.123px;color:#000;">Baustellenlager in Container an der baustelle &quot;Berliner Ring&quot;</span>
<span class="a " style="left:411.60px;top:276.19px;line-height:0;white-space:nowrap;font-size:11px;font-weight:400;letter-spacing:0.06px;color:#000;">Überwachung *</span>
<span class="a " style="left:500.60px;top:276.19px;line-height:0;white-space:nowrap;font-size:11px;font-weight:400;letter-spacing:-0.106px;color:#000;">Protokoll, Fehlbestände ablehnen</span>
<span class="a " style="left:411.60px;top:292.19px;line-height:0;white-space:nowrap;font-size:11px;font-weight:400;letter-spacing:0.12px;color:#000;">Ausgeblendet *</span>
<span class="a " style="left:500.60px;top:292.19px;line-height:0;white-space:nowrap;font-size:11px;font-weight:400;letter-spacing:-0.281px;color:#000;">Nein</span>
<span class="a " style="left:411.90px;top:324.02px;line-height:0;white-space:nowrap;font-size:11.5px;font-weight:700;letter-spacing:0.205px;color:#404040;">Lagerspezifikationen</span>
<span class="a " style="left:411.60px;top:348.19px;line-height:0;white-space:nowrap;font-size:11px;font-weight:400;letter-spacing:-0.249px;color:#000;">Höhe</span>
<span class="a " style="left:500.60px;top:348.19px;line-height:0;white-space:nowrap;font-size:11px;font-weight:400;letter-spacing:0.901px;color:#000;">2,4</span>
<span class="a " style="left:411.60px;top:364.19px;line-height:0;white-space:nowrap;font-size:11px;font-weight:400;letter-spacing:0.042px;color:#000;">Breite</span>
<span class="a " style="left:500.60px;top:364.19px;line-height:0;white-space:nowrap;font-size:11px;font-weight:400;letter-spacing:0.901px;color:#000;">2,1</span>
<span class="a " style="left:411.60px;top:380.19px;line-height:0;white-space:nowrap;font-size:11px;font-weight:400;letter-spacing:0.131px;color:#000;">Tiefe</span>
<span class="a " style="left:500.60px;top:380.19px;line-height:0;white-space:nowrap;font-size:11px;font-weight:400;letter-spacing:0.901px;color:#000;">6,2</span>
<span class="a " style="left:411.60px;top:396.19px;line-height:0;white-space:nowrap;font-size:11px;font-weight:400;letter-spacing:0.196px;color:#000;">Inhaltseinheit *</span>
<span class="a " style="left:411.60px;top:412.19px;line-height:0;white-space:nowrap;font-size:11px;font-weight:400;letter-spacing:0.014px;color:#000;">Kapazität</span>
<span class="a " style="left:411.90px;top:444.02px;line-height:0;white-space:nowrap;font-size:11.5px;font-weight:700;letter-spacing:0.245px;color:#404040;">Lagerbestände</span>
<span class="a " style="left:458.01px;top:470.02px;line-height:0;white-space:nowrap;font-size:11.5px;font-weight:700;letter-spacing:0.529px;color:#000;">Artikel</span>
<span class="a " style="left:662.71px;top:470.02px;line-height:0;white-space:nowrap;font-size:11.5px;font-weight:700;letter-spacing:0.926px;color:#000;">Text</span>
<span class="a " style="left:834.40px;top:470.02px;line-height:0;white-space:nowrap;font-size:11.5px;font-weight:700;letter-spacing:0.298px;color:#000;">Lagerplatz</span>
<span class="a " style="left:905.83px;top:470.02px;line-height:0;white-space:nowrap;font-size:11.5px;font-weight:700;letter-spacing:0.161px;color:#000;">Bestand</span>
<span class="a " style="left:971.86px;top:470.02px;line-height:0;white-space:nowrap;font-size:11.5px;font-weight:700;letter-spacing:0.229px;color:#000;">Min</span>
<span class="a " style="left:1023.27px;top:470.02px;line-height:0;white-space:nowrap;font-size:11.5px;font-weight:700;letter-spacing:0.542px;color:#000;">Max</span>
<span class="a " style="left:1066.38px;top:470.02px;line-height:0;white-space:nowrap;font-size:11.5px;font-weight:700;letter-spacing:-0.23px;color:#000;">Einh</span>
<span class="a " style="left:1103.80px;top:470.02px;line-height:0;white-space:nowrap;font-size:11.5px;font-weight:700;letter-spacing:0.102px;color:#000;">Ltz. Abgang</span>
<span class="a " style="left:1187.07px;top:470.02px;line-height:0;white-space:nowrap;font-size:11.5px;font-weight:700;letter-spacing:0.135px;color:#000;">Ltz. Zugang</span>
<span class="a " style="left:4.90px;top:760.84px;line-height:0;white-space:nowrap;font-size:12px;font-weight:400;letter-spacing:0.099px;color:#000;">Enthält das Fassungsvermögen in Inhaltseinheiten.</span>
<span class="a " style="left:1060.90px;top:760.84px;line-height:0;white-space:nowrap;font-size:12px;font-weight:400;letter-spacing:0.159px;color:#000;">admin - Moser-Dokumentation.mdb</span>
</body></html>
